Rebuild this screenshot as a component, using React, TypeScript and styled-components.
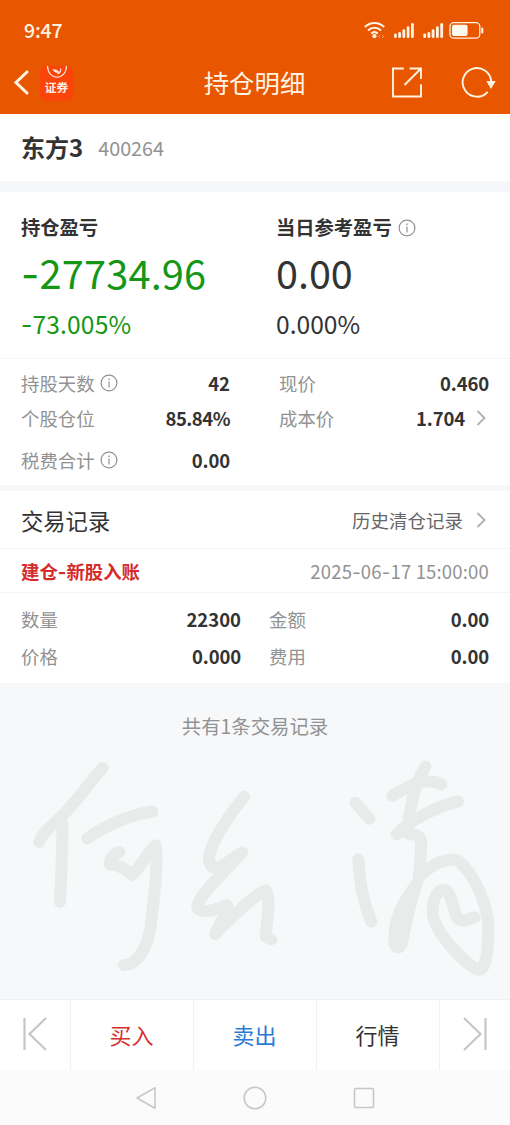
import React from 'react';
import styled, { createGlobalStyle } from 'styled-components';

const GlobalStyle = createGlobalStyle`
  * { box-sizing: border-box; }
  body {
    margin: 0;
    background: #fbfbfb;
    font-family: "Noto Sans CJK SC", "Noto Sans", sans-serif;
    color: #333;
  }
`;

const Screen = styled.div`
  width: 510px;
  height: 1125px;
  display: flex;
  flex-direction: column;
  overflow: hidden;
  background: #fff;
`;

interface TextProps {
  $size: number;
  $color?: string;
  $weight?: number;
  $track?: number;
}

const Text = styled.span<TextProps>`
  font-size: ${(p) => p.$size}px;
  line-height: 1.2;
  color: ${(p) => p.$color ?? '#333'};
  font-weight: ${(p) => p.$weight ?? 400};
  letter-spacing: ${(p) => p.$track ?? 0}px;
  white-space: pre;
`;

/* Wider hyphen than the CJK face provides. */
const Dash = styled.span`
  font-family: Inter, "Noto Sans CJK SC", sans-serif;
  line-height: 1;
`;

const Header = styled.header`
  height: 114px;
  flex: none;
  background: #e85600;
  color: #fff3e2;
`;

const StatusBar = styled.div`
  height: 52px;
  padding: 7px 25px 0 24px;
  display: flex;
  align-items: center;
  justify-content: space-between;
`;

const TitleBar = styled.div`
  height: 62px;
  padding: 0 14px 0 13px;
  display: grid;
  grid-template-columns: 1fr auto 1fr;
  align-items: center;
`;

const Title = styled.h1`
  margin: 0;
  padding-bottom: 5px;
  line-height: 1;
`;

const TitleSide = styled.div<{ $end?: boolean }>`
  display: flex;
  align-items: center;
  justify-content: ${(p) => (p.$end ? 'flex-end' : 'flex-start')};
  gap: ${(p) => (p.$end ? 38 : 10)}px;
`;

const Brand = styled.div`
  width: 33px;
  height: 35px;
  border-radius: 6px;
  background: #fa4409;
  display: flex;
  flex-direction: column;
  align-items: center;
  gap: 1px;
`;

const StockRow = styled.section`
  height: 67px;
  flex: none;
  padding: 0 21px;
  display: flex;
  align-items: center;
  gap: 15px;
`;

const Band = styled.div<{ $height: number }>`
  height: ${(p) => p.$height}px;
  flex: none;
  background: #f5f7fa;
`;

const Summary = styled.section`
  height: 167px;
  flex: none;
  padding: 24px 21px 0;
  display: grid;
  grid-template-columns: 255px 1fr;
  border-bottom: 1px solid #f5f5f5;
`;

const SummaryCell = styled.div`
  display: flex;
  flex-direction: column;
  align-items: flex-start;
  white-space: nowrap;
`;

const LabelLine = styled.div<{ $gap?: number }>`
  display: flex;
  align-items: center;
  gap: ${(p) => p.$gap ?? 6}px;
`;

const Amount = styled.div`
  height: 48px;
  margin: 9px 0 13px;
  line-height: 1;
`;

const Percent = styled.div`
  height: 30px;
  line-height: 1;
`;

const StatGrid = styled.section<{ $rows: string; $left: number; $gap: number; $height: number }>`
  height: ${(p) => p.$height}px;
  flex: none;
  padding: 6px 21px 0;
  display: grid;
  grid-template-columns: ${(p) => p.$left}px 1fr;
  grid-template-rows: ${(p) => p.$rows};
  column-gap: ${(p) => p.$gap}px;
`;

const Stat = styled.div`
  display: flex;
  align-items: center;
  justify-content: space-between;
`;

const ValueLine = styled.div<{ $gap?: number }>`
  display: flex;
  align-items: center;
  gap: ${(p) => p.$gap ?? 11}px;
`;

const ListRow = styled.div<{ $height: number }>`
  height: ${(p) => p.$height}px;
  flex: none;
  padding: 1px 21px 0;
  display: flex;
  align-items: center;
  justify-content: space-between;
  border-bottom: 1px solid #f5f5f5;
`;

const Footer = styled.section`
  flex: 1;
  background: #f7f8fa;
  display: flex;
  flex-direction: column;
  align-items: center;
`;

const CountLine = styled.div`
  height: 57px;
  padding-top: 31px;
  flex: none;
`;

const ActionBar = styled.nav`
  height: 71px;
  flex: none;
  display: grid;
  grid-template-columns: 71px 123px 123px 123px 1fr;
  border-top: 1px solid #f0f1f2;
`;

const Action = styled.button`
  border: 0;
  border-right: 1px solid #f0f1f2;
  background: #fff;
  padding: 0 1px 2px 0;
  font-family: inherit;
  display: flex;
  align-items: center;
  justify-content: center;
  &:last-child { border-right: 0; }
`;

const SystemNav = styled.div`
  height: 55px;
  flex: none;
  background: #fbfbfb;
  display: flex;
  align-items: center;
  justify-content: center;
  gap: 86px;
`;

const InfoIcon = () => (
  <svg width="18" height="18" viewBox="0 0 18 18" fill="none" stroke="#929292" strokeWidth="1.2">
    <circle cx="9" cy="9" r="7.9" />
    <path d="M9 7.4V13.4" strokeWidth="1.2" />
    <path d="M9 4.4V6" strokeWidth="1.4" />
  </svg>
);

const Chevron = () => (
  <svg width="13" height="18" viewBox="0 0 13 18" fill="none" stroke="#b0b0b0" strokeWidth="1.8">
    <path d="M1.5 2L8.5 9L1.5 16" />
  </svg>
);

const StatusIcons = () => (
  <svg width="122" height="20" viewBox="363 19 122 20" fill="none" stroke="#fff3e2">
    <g strokeWidth="2.1">
      <path d="M364.8 26.1C370.4 20.6 378.6 20.6 384.2 26.1" />
      <path d="M368 29.5C371.8 25.8 377.2 25.8 381 29.5" />
      <path d="M371.2 32.6C373.2 30.8 375.8 30.8 377.8 32.6" />
    </g>
    <circle cx="374.4" cy="35.2" r="2.1" fill="#fff3e2" stroke="none" />
    <path d="M380 34l-1.5 1.5L380 37M382 34l1.5 1.5L382 37" strokeWidth=".8" opacity=".6" />
    {[394, 423.3].map((x) => (
      <g key={x} strokeWidth="2.8" strokeLinecap="round">
        <path d={`M${x + 1.4} 33.8V35.7`} />
        <path d={`M${x + 5.6} 32.3V35.7`} />
        <path d={`M${x + 9.8} 29.6V35.7`} />
        <path d={`M${x + 14.1} 26.7V35.7`} />
        <path d={`M${x + 18.4} 23.3V35.7`} />
      </g>
    ))}
    <rect x="450" y="21.6" width="29.8" height="15.6" rx="4" strokeWidth="1.3" />
    <rect x="452" y="23.8" width="15.6" height="11.2" rx="2" fill="#fff8ec" stroke="none" />
    <path d="M482.3 27.6V31.4" strokeWidth="2" strokeLinecap="round" />
  </svg>
);

const BackIcon = () => (
  <svg width="17" height="28" viewBox="0 0 17 28" fill="none" stroke="#fff3e2" strokeWidth="3.1" strokeLinecap="round">
    <path d="M14 3L3 13.5L14 24" />
  </svg>
);

const ShareIcon = () => (
  <svg width="32" height="32" viewBox="0 0 32 32" fill="none" stroke="#fff3e2" strokeWidth="1.9">
    <path d="M12.8 1.5H2V29.5H30V17.3" />
    <path d="M18.6 1.5H30V12M30 1.5L13.5 18" />
  </svg>
);

const RefreshIcon = () => (
  <svg width="35" height="32" viewBox="0 0 35 32" fill="none" stroke="#fff3e2" strokeWidth="1.9">
    <path d="M30.2 14.5A14.3 14.3 0 1 0 26.7 24.8" />
    <path d="M25.3 14H34.7L30 22Z" fill="#fff3e2" stroke="none" />
  </svg>
);

const BrandMark = () => (
  <svg width="22" height="13" viewBox="0 0 22 13" fill="none" stroke="#fff0e4" strokeWidth="1.1">
    <path d="M1.5 0C2 15 20 15 20.5 0" />
    <path d="M6.5 3.5C9 3 12 4 13.3 6.5C11 7.5 8.5 6 6.5 3.5Z" fill="#fff0e4" strokeWidth=".4" />
    <path d="M11.5 8C14 7 15 5 14.7 2.5" />
  </svg>
);

/* Handwritten signature watermark, drawn as brush strokes. */
const Signature = () => (
  <svg width="510" height="250" viewBox="0 0 1530 750" fill="none" stroke="#e9eaea" strokeWidth="36" strokeLinecap="round" strokeLinejoin="round">
    <path d="M308 84C270 125 225 192 180 234C150 262 125 280 118 306" />
    <path d="M187 250C187 330 184 410 180 485" />
    <path d="M262 295C320 255 400 220 457 215" />
    <path d="M358 336C338 340 328 362 330 374C350 372 380 388 396 405C420 385 445 332 467 316C475 400 460 480 452 560C440 630 410 675 372 675" />
    <path d="M732 170C700 210 642 285 628 345C624 380 640 388 660 380C685 368 705 350 727 337C680 390 600 460 592 498C590 520 645 516 680 495C690 510 655 560 645 582C690 540 760 462 798 452C814 490 800 540 797 590L814 598" />
    <g transform="translate(900 0)">
      <path d="M166 188L208 236" />
      <path d="M175 358C178 430 195 500 214 545" />
      <path d="M376 80C345 130 332 190 322 268" />
      <path d="M277 168C320 140 380 110 424 133" />
      <path d="M474 184C410 200 330 240 290 283" />
      <path d="M322 280C345 285 362 285 363 305C363 340 362 370 356 412" />
      <path d="M338 418C285 490 262 540 266 610C270 650 318 652 325 605C337 540 352 480 371 425Z" fill="#e9eaea" stroke="none" />
      <path d="M362 405C400 370 450 350 475 362C530 410 563 500 565 560C565 620 560 690 537 689C500 680 402 575 398 520C396 480 412 440 440 452C468 485 455 545 492 541C510 540 515 532 524 532" />
    </g>
  </svg>
);

const GRAY = '#929292';
const GREEN = '#159715';

const withDashes = (text: string) =>
  text.split(/(-)/).map((part, i) => (part === '-' ? <Dash key={i}>-</Dash> : part));

interface StatItemProps {
  label: string;
  value: string;
  track?: number;
  info?: boolean;
  link?: boolean;
}

const StatItem = ({ label, value, track, info, link }: StatItemProps) => (
  <Stat>
    <LabelLine $gap={5}>
      <Text $size={18.4} $color={GRAY}>{label}</Text>
      {info && <InfoIcon />}
    </LabelLine>
    <ValueLine>
      <Text $size={18.5} $weight={700} $track={track}>{value}</Text>
      {link && <Chevron />}
    </ValueLine>
  </Stat>
);

export default function App() {
  return (
    <>
      <GlobalStyle />
      <Screen>
        <Header>
          <StatusBar>
            <Text $size={19.5} $color="#fff3e2" $weight={500} $track={-0.2}>9:47</Text>
            <StatusIcons />
          </StatusBar>
          <TitleBar>
            <TitleSide>
              <BackIcon />
              <Brand>
                <BrandMark />
                <Text $size={11.8} $color="#fff0e4" $weight={700}>证券</Text>
              </Brand>
            </TitleSide>
            <Title><Text $size={25.4} $color="#fff3e2">持仓明细</Text></Title>
            <TitleSide $end>
              <ShareIcon />
              <RefreshIcon />
            </TitleSide>
          </TitleBar>
        </Header>

        <StockRow>
          <Text $size={24} $weight={700}>东方3</Text>
          <Text $size={19.8} $color={GRAY}>400264</Text>
        </StockRow>
        <Band $height={11} />

        <Summary>
          <SummaryCell>
            <LabelLine>
              <Text $size={19.3} $weight={700}>持仓盈亏</Text>
            </LabelLine>
            <Amount><Text $size={39.8} $color={GREEN} $track={0.15}>{withDashes('-27734.96')}</Text></Amount>
            <Percent><Text $size={24.6} $color={GREEN} $track={0.15}>{withDashes('-73.005%')}</Text></Percent>
          </SummaryCell>
          <SummaryCell>
            <LabelLine>
              <Text $size={19.3} $weight={700}>当日参考盈亏</Text>
              <InfoIcon />
            </LabelLine>
            <Amount><Text $size={39.5}>0.00</Text></Amount>
            <Percent><Text $size={24.6}>0.000%</Text></Percent>
          </SummaryCell>
        </Summary>

        <StatGrid $rows="36px 34px 50px" $left={209} $gap={49} $height={126}>
          <StatItem label="持股天数" value="42" info />
          <StatItem label="现价" value="0.460" track={-0.15} />
          <StatItem label="个股仓位" value="85.84%" track={-0.5} />
          <StatItem label="成本价" value="1.704" track={-0.15} link />
          <StatItem label="税费合计" value="0.00" track={-0.15} info />
        </StatGrid>
        <Band $height={6} />

        <ListRow $height={58}>
          <Text $size={22.3}>交易记录</Text>
          <ValueLine $gap={13}>
            <Text $size={18.5} $color="#666">历史清仓记录</Text>
            <Chevron />
          </ValueLine>
        </ListRow>
        <ListRow $height={44}>
          <Text $size={18.4} $color="#d62b2b" $weight={700}>{withDashes('建仓-新股入账')}</Text>
          <Text $size={18.5} $color={GRAY} $track={0.18}>{withDashes('2025-06-17 15:00:00')}</Text>
        </ListRow>
        <StatGrid $rows="40px 34px" $left={220} $gap={28} $height={90}>
          <StatItem label="数量" value="22300" />
          <StatItem label="金额" value="0.00" track={-0.15} />
          <StatItem label="价格" value="0.000" track={-0.15} />
          <StatItem label="费用" value="0.00" track={-0.15} />
        </StatGrid>

        <Footer>
          <CountLine>
            <Text $size={19.4} $color={GRAY}>共有1条交易记录</Text>
          </CountLine>
          <Signature />
        </Footer>

        <ActionBar>
          <Action>
            <svg width="26" height="34" viewBox="0 0 26 34" fill="none" stroke="#c6c6c6" strokeWidth="2.2">
              <path d="M2.5 1V33M24 1L7.5 17L24 33" />
            </svg>
          </Action>
          <Action><Text $size={22} $color="#d22f2f">买入</Text></Action>
          <Action><Text $size={22} $color="#2b7bd3">卖出</Text></Action>
          <Action><Text $size={22}>行情</Text></Action>
          <Action>
            <svg width="26" height="34" viewBox="0 0 26 34" fill="none" stroke="#c6c6c6" strokeWidth="2.2">
              <path d="M23.5 1V33M2 1L18.5 17L2 33" />
            </svg>
          </Action>
        </ActionBar>
        <SystemNav>
          <svg width="22" height="24" viewBox="0 0 22 24" fill="none" stroke="#c8c8c8" strokeWidth="1.6" strokeLinejoin="round">
            <path d="M2 12L20 1.8V22.2Z" />
          </svg>
          <svg width="24" height="24" viewBox="0 0 24 24" fill="none" stroke="#c8c8c8" strokeWidth="1.6">
            <circle cx="12" cy="12" r="10.8" />
          </svg>
          <svg width="22" height="22" viewBox="0 0 22 22" fill="none" stroke="#c8c8c8" strokeWidth="1.6">
            <rect x="1.5" y="1.5" width="19" height="19" rx="1" />
          </svg>
        </SystemNav>
      </Screen>
    </>
  );
}
